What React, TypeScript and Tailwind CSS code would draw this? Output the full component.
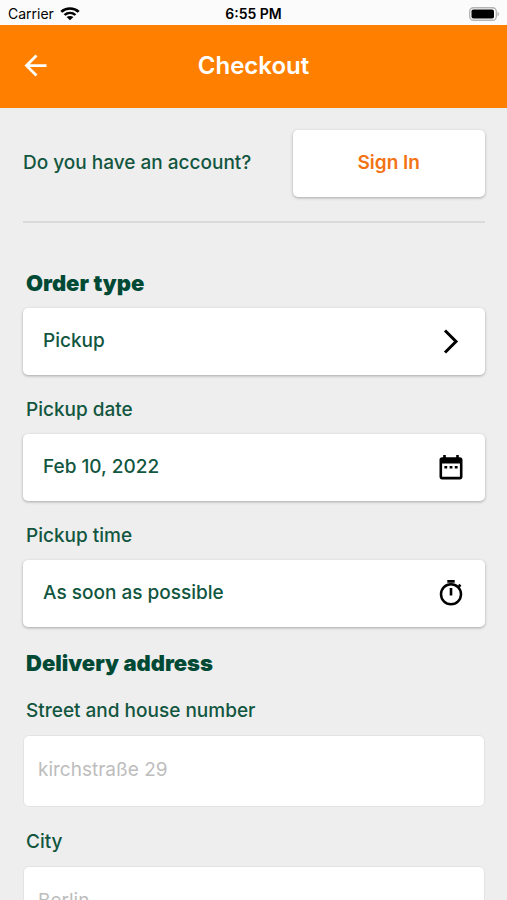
import type { ReactNode } from 'react';
import { MdArrowBack } from 'react-icons/md';

function StatusBar() {
  return (
    <div className="grid h-[25px] grid-cols-3 items-center bg-[#fbfbfb] px-2 pt-0.5 text-[14px] leading-5 text-black">
      <div className="flex items-center gap-1.5">
        <span>Carrier</span>
        <svg width="20" height="14" viewBox="0 0 18 14" fill="none" preserveAspectRatio="none" aria-hidden="true">
          <path d="M1.2 4.9C5.4.5 12.6.5 16.8 4.9" stroke="black" strokeWidth="2.5" />
          <path d="M4.1 8C7 5.2 11 5.2 13.9 8" stroke="black" strokeWidth="2.4" />
          <path d="M9 13.2 5.9 10C7.6 8.5 10.4 8.5 12.1 10Z" fill="black" />
        </svg>
      </div>
      <span className="text-center font-semibold">6:55 PM</span>
      <svg className="justify-self-end" width="30" height="14" viewBox="0 0 30 14" aria-hidden="true">
        <rect x="0.7" y="0.7" width="26.6" height="12.6" rx="3.8" fill="white" stroke="#b4b4b4" strokeWidth="1.4" />
        <rect x="2.5" y="2.5" width="22.5" height="9" rx="1.8" fill="black" />
        <path d="M28.5 4.7c2 .9 2 3.7 0 4.6Z" fill="#b4b4b4" />
      </svg>
    </div>
  );
}

function ChevronIcon() {
  return (
    <svg width="28" height="28" viewBox="0 0 28 28" fill="none" aria-hidden="true">
      <path d="M8 2.5 19 13.5 8 24.5" stroke="black" strokeWidth="3" />
    </svg>
  );
}

function CalendarIcon() {
  return (
    <svg width="28" height="28" viewBox="0 1 28 28" aria-hidden="true">
      <path
        fillRule="evenodd"
        d="M6.2 2h2.6v2.3h10.4V2h2.6v2.3h1.1c1.6 0 2.6 1 2.6 2.6v16.9c0 1.6-1 2.6-2.6 2.6H5.1c-1.6 0-2.6-1-2.6-2.6V6.900c0-1.600 1-2.600 2.600-2.600h1.100ZM5.100 10.500v13.300h17.800V10.500Z"
      />
      <path d="M7.4 12.9h2.8v2.6H7.4ZM12.6 12.9h2.8v2.6h-2.8ZM17.8 12.9h2.8v2.6h-2.8Z" />
    </svg>
  );
}

function TimerIcon() {
  return (
    <svg width="28" height="28" viewBox="0 2 28 28" fill="none" stroke="black" aria-hidden="true">
      <circle cx="14" cy="16.3" r="10" strokeWidth="2.5" />
      <path d="M10.3 3.4h7.4M14 10.1v7.400" strokeWidth="2.6" />
      <path d="m20.5 10 2.300-2.400" strokeWidth="2" />
      <path d="m21.8 6.500 1.900 1.900" strokeWidth="2" />
    </svg>
  );
}

type PickerProps = {
  id: string;
  labelledBy: string;
  value: string;
  icon: ReactNode;
};

function Picker({ id, labelledBy, value, icon }: PickerProps) {
  return (
    <button
      id={id}
      type="button"
      aria-labelledby={`${labelledBy} ${id}`}
      className="mt-3 flex h-[67px] w-full items-center justify-between rounded-[5px] bg-white px-5 text-left text-[19px] font-medium shadow-[0_1px_3px_rgba(0,0,0,0.3)]"
    >
      <span>{value}</span>
      {icon}
    </button>
  );
}

function SectionTitle({ id, children }: { id: string; children: ReactNode }) {
  return (
    <h2 id={id} className="pl-[3px] text-[22px] leading-[26px] font-black text-[#004a35]">
      {children}
    </h2>
  );
}

function AddressField({ id, label, placeholder }: { id: string; label: string; placeholder: string }) {
  return (
    <div className="mt-[23px]">
      <label htmlFor={id} className="block pl-[3px] text-[19px] leading-6 font-medium">
        {label}
      </label>
      <input
        id={id}
        type="text"
        placeholder={placeholder}
        className="mt-3 block h-[72px] w-full rounded-md border border-[#e3e3e3] bg-white px-3.5 pb-1 text-[19px] placeholder:text-[#bdbdbd]"
      />
    </div>
  );
}

const pickupFields = [
  { id: 'pickup-date', label: 'Pickup date', value: 'Feb 10, 2022', icon: <CalendarIcon /> },
  { id: 'pickup-time', label: 'Pickup time', value: 'As soon as possible', icon: <TimerIcon /> },
];

export default function App() {
  return (
    <div className="h-screen overflow-hidden bg-[#eeeeee] font-['Inter',sans-serif] text-[#125640]">
      <StatusBar />

      <header className="grid h-[83px] grid-cols-[1fr_auto_1fr] items-center bg-[#ff8000] px-[19px] pb-0.5 text-white">
        <button type="button" aria-label="Back" className="justify-self-start">
          <MdArrowBack size={33} />
        </button>
        <h1 className="text-2xl font-semibold">Checkout</h1>
      </header>

      <main className="pt-[22px] pr-[22px] pl-[23px]">
        <div className="flex items-center justify-between gap-4">
          <p className="text-[19px] font-medium">Do you have an account?</p>
          <button
            type="button"
            className="h-[67px] w-5/12 rounded-[5px] bg-white text-[19px] font-semibold text-[#f37314] shadow-[0_1px_3px_rgba(0,0,0,0.3)]"
          >
            Sign In
          </button>
        </div>

        <hr className="mt-6 border-t-2 border-[#dadada]" />

        {/* Order type */}
        <section className="mt-[47px]">
          <SectionTitle id="order-type-title">Order type</SectionTitle>
          <Picker id="order-type" labelledBy="order-type-title" value="Pickup" icon={<ChevronIcon />} />
          {pickupFields.map((field) => (
            <div key={field.id} className="mt-[23px]">
              <label
                id={`${field.id}-label`}
                htmlFor={field.id}
                className="block pl-[3px] text-[19px] leading-6 font-medium"
              >
                {field.label}
              </label>
              <Picker id={field.id} labelledBy={`${field.id}-label`} value={field.value} icon={field.icon} />
            </div>
          ))}
        </section>

        {/* Delivery address */}
        <section className="mt-[23px]">
          <SectionTitle id="address-title">Delivery address</SectionTitle>
          <AddressField id="street" label="Street and house number" placeholder="kirchstraße 29" />
          <AddressField id="city" label="City" placeholder="Berlin" />
        </section>
      </main>
    </div>
  );
}
